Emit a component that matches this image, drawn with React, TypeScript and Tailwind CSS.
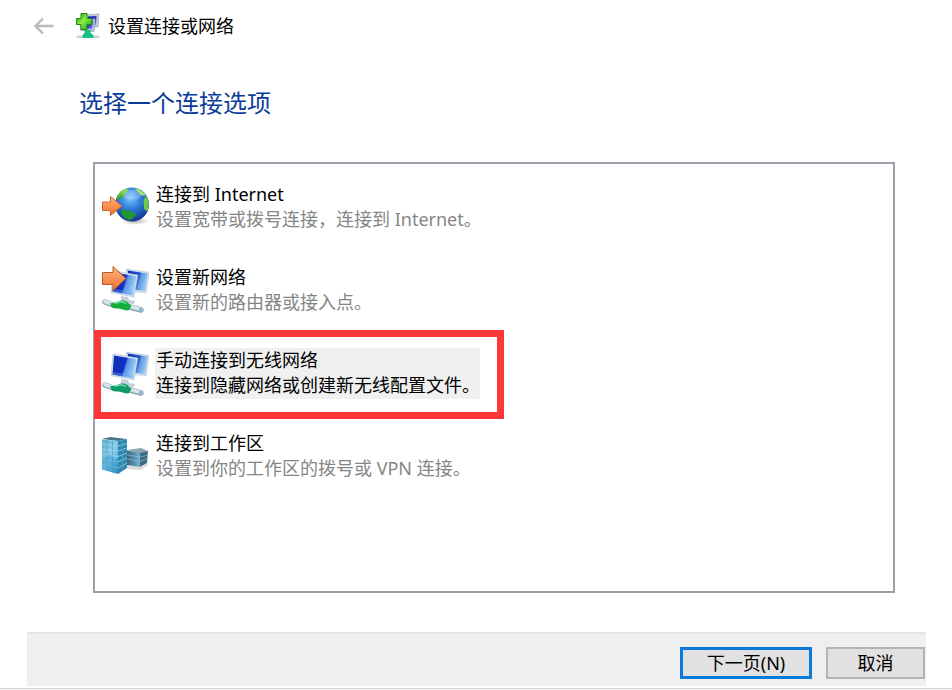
import clsx from 'clsx'
import type { ReactNode } from 'react'

function BackIcon() {
  return (
    <svg className="h-5 w-5" viewBox="0 0 20 20" fill="none" stroke="#bbb" strokeWidth="2.4">
      <path d="M19.5 10H2M9 2.5L1.5 10L9 17.5" />
    </svg>
  )
}

function WizardIcon() {
  return (
    <svg className="h-[26px] w-6" viewBox="0 0 24 26">
      <defs>
        <linearGradient id="wizard-screen" x1="0" y1="0" x2="1" y2="1">
          <stop offset="0" stopColor="#1414a0" />
          <stop offset="0.6" stopColor="#3238d0" />
          <stop offset="1" stopColor="#8f9cf8" />
        </linearGradient>
        <linearGradient id="wizard-plus" x1="0" y1="0" x2="1" y2="1">
          <stop offset="0.1" stopColor="#2fae1f" />
          <stop offset="0.45" stopColor="#8fee45" />
          <stop offset="0.9" stopColor="#22a81c" />
        </linearGradient>
      </defs>
      <path d="M9 1.5L23 1L22 14L12 14Z" fill="#c3c9d8" stroke="#a7b0c6" strokeWidth="0.7" />
      <path d="M12 3.5L20.5 3L20 12L12 12Z" fill="url(#wizard-screen)" />
      <path d="M4 7L19 6L18 18.500L4.500 17.500Z" fill="#bcc4d6" stroke="#98a3bd" strokeWidth="0.7" />
      <path d="M6 8L17 7.800L16 16L6 15.500Z" fill="url(#wizard-screen)" />
      <path d="M0.500 22.500H23.500V25H0.500Z" fill="#c9d0d6" />
      <path d="M8.500 17H14.500V20L17.500 22V25H6.500V22L8.500 20Z" fill="#16c283" />
      <path
        d="M5 0.500H11V5.500H16V11.500H11V16.500H5V11.500H0.500V5.500H5Z"
        fill="url(#wizard-plus)"
        stroke="#1b8a16"
        strokeLinejoin="round"
      />
    </svg>
  )
}

function GlobeIcon() {
  return (
    <svg className="h-12 w-12" viewBox="0 0 48 48">
      <defs>
        <radialGradient id="globe-sea" cx="0.45" cy="0.3" r="0.7">
          <stop offset="0" stopColor="#7fc8fa" />
          <stop offset="0.45" stopColor="#2f80dc" />
          <stop offset="1" stopColor="#123590" />
        </radialGradient>
        <linearGradient id="globe-land" x1="0" y1="0" x2="0" y2="1">
          <stop offset="0" stopColor="#a8e45c" />
          <stop offset="1" stopColor="#219632" />
        </linearGradient>
        <radialGradient id="globe-shadow">
          <stop offset="0" stopColor="#777" stopOpacity="0.6" />
          <stop offset="1" stopColor="#777" stopOpacity="0" />
        </radialGradient>
        <linearGradient id="globe-arrow" x1="0" y1="0" x2="0" y2="1">
          <stop offset="0" stopColor="#ffb377" />
          <stop offset="1" stopColor="#f36f2b" />
        </linearGradient>
      </defs>
      <ellipse cx="34" cy="39" rx="14" ry="4" fill="url(#globe-shadow)" />
      <circle cx="31" cy="22.500" r="17" fill="url(#globe-sea)" />
      <path
        d="M15.500 17C17 11 21 7 26 6.300C28 9 25 10.500 24 13C22 14 21 17 18 17C18 18 16.500 19 15.500 17Z"
        fill="url(#globe-land)"
      />
      <path
        d="M34 6C39 7 42 9.500 44.500 13C44 14.500 42.500 13 41 13.500C39 13 39 11 37 10C36 8.500 34.500 8 34 6Z"
        fill="#9fe06a"
      />
      <path
        d="M45 14C48 18 48.500 24 46.500 28.500C44.500 29.500 42.500 27 43 24C42 20 43 16 45 14Z"
        fill="#6fca4a"
      />
      <path
        d="M20 29C23 26 26 28 29 29.500C33 29.500 36 32 34.500 34C31 36 31 38 27.500 38C23 36.500 20.500 33 20 29Z"
        fill="#23962f"
      />
      <ellipse cx="31" cy="13" rx="9" ry="5" fill="#fff" opacity="0.2" />
      <path
        d="M1.500 20H9.500V14.500L21 24L9.500 33.500V28.500H1.500Z"
        fill="url(#globe-arrow)"
        stroke="#c8642f"
        strokeLinejoin="round"
      />
    </svg>
  )
}

type ComputersIconProps = {
  id: string
  cableColor: string
  children?: ReactNode
}

function ComputersIcon({ id, cableColor, children }: ComputersIconProps) {
  return (
    <svg className="h-12 w-12" viewBox="0 0 48 48">
      <defs>
        <linearGradient id={`${id}-front`} x1="0" y1="0.1" x2="1" y2="0.4">
          <stop offset="0" stopColor="#1230b0" />
          <stop offset="0.55" stopColor="#1030c8" />
          <stop offset="0.62" stopColor="#5a92e4" />
          <stop offset="1" stopColor="#a4d4f8" />
        </linearGradient>
        <linearGradient id={`${id}-back`} x1="0" y1="0" x2="1" y2="0.3">
          <stop offset="0" stopColor="#0f2cb0" />
          <stop offset="0.6" stopColor="#2450cc" />
          <stop offset="0.7" stopColor="#5f98e0" />
          <stop offset="1" stopColor="#93c4f0" />
        </linearGradient>
      </defs>
      <path d="M25 4L48 7.500L45 27.500L32 26.500Z" fill="#d3e2f2" stroke="#a9bcd4" strokeWidth="0.6" />
      <path d="M26.500 5.500L46.500 8.500L44 26L31 24.500Z" fill={`url(#${id}-back)`} />
      <path d="M20 31L27 32L28 35L34 36L33 39L20 38Z" fill="#c3ced8" />
      <path d="M12 6L37 10L33 32L10 27.500Z" fill="#d9e6f3" stroke="#a9bcd4" strokeWidth="0.6" />
      <path d="M13 7.500L35.500 11.200L32 30.500L11.500 26.500Z" fill={`url(#${id}-front)`} />
      <path d="M12 24L32.500 27L32 30.500L11.500 26.500Z" fill="#6fa8ec" opacity="0.4" />
      <path d="M4 37L12 40M29 42L40 45" stroke="#8ba3b2" strokeWidth="5.500" strokeLinecap="round" />
      <path d="M4 36.500L12 39.500M29 41.500L40 44.500" stroke="#d6e5ec" strokeWidth="3.800" strokeLinecap="round" />
      <path d="M38.500 42.500L41.500 43.500L40.500 47L37.500 46Z" fill="#86b4cd" />
      <path
        d="M9 38C12 39 15 37 20 35.500C24 35 27 36.500 28 39C30 39.500 30.500 40.500 30 42L27.500 45.500C23 45.500 20 43.500 16 43.500C12 43.500 10 42.500 9 38Z"
        fill={cableColor}
      />
      <path d="M14 38.500C18 36.500 22 36.500 25 38.500" fill="none" stroke="#8cecba" strokeWidth="1.200" />
      {children}
    </svg>
  )
}

function NewNetworkIcon() {
  return (
    <ComputersIcon id="new-network" cableColor="#16ad3c">
      <defs>
        <linearGradient id="new-network-arrow" x1="0" y1="0" x2="0" y2="1">
          <stop offset="0" stopColor="#ffb67c" />
          <stop offset="1" stopColor="#f0702c" />
        </linearGradient>
      </defs>
      <path
        d="M1.500 7.500H12V1.500L25 13.500L12 25.500V19.500H1.500Z"
        fill="url(#new-network-arrow)"
        stroke="#b9582a"
        strokeLinejoin="round"
      />
    </ComputersIcon>
  )
}

function WirelessIcon() {
  return <ComputersIcon id="wireless" cableColor="#129a68" />
}

function WorkplaceIcon() {
  return (
    <svg className="h-12 w-12" viewBox="0 0 48 48">
      <defs>
        <linearGradient id="tower-front" x1="0" y1="0" x2="1" y2="1">
          <stop offset="0" stopColor="#5ea9cf" />
          <stop offset="0.5" stopColor="#86cdec" />
          <stop offset="1" stopColor="#3c9bc9" />
        </linearGradient>
        <linearGradient id="annex-front" x1="0" y1="0" x2="1" y2="0">
          <stop offset="0" stopColor="#3a647c" />
          <stop offset="1" stopColor="#6fb3d3" />
        </linearGradient>
      </defs>
      <path d="M26 34L40 36L47 32V34L40 39L26 38Z" fill="#999" opacity="0.35" />
      <path d="M26 19L40 17L47 20L39 23Z" fill="#8fa5b2" />
      <path d="M26 19.500L39 22V36L26 34Z" fill="url(#annex-front)" />
      <path d="M39 22L47 20L46 32L39 36Z" fill="#3f6b82" />
      <path
        d="M26 24L39 26L47 24M26 28L39 30.500L46.500 27.500"
        stroke="#a4d4e8"
        strokeWidth="0.5"
        fill="none"
      />
      <path d="M1 8L9 6L26 8L17 10Z" fill="#4a7488" />
      <path d="M1 8.500L17 10V43L1 38.500Z" fill="url(#tower-front)" />
      <path d="M17 10L26 8V37L17 43Z" fill="#2f88b2" />
      <path
        d="M1 13L17 15L26 12.500M1 18L17 20L26 17M1 23L17 25.500L26 22M1 28L17 31L26 27M1 33L17 37L26 32"
        fill="none"
        stroke="#a6dcf0"
        strokeWidth="0.7"
      />
      <path d="M6 9V40M11.500 9.500V41.500M21.500 9V40" stroke="#4f9fc4" strokeWidth="0.6" />
      <path d="M1 28L9 23L14 29L17 27V43L1 38.500Z" fill="#1886bc" opacity="0.35" />
    </svg>
  )
}

const options = [
  { title: '连接到 Internet', description: '设置宽带或拨号连接，连接到 Internet。', Icon: GlobeIcon },
  { title: '设置新网络', description: '设置新的路由器或接入点。', Icon: NewNetworkIcon },
  {
    title: '手动连接到无线网络',
    description: '连接到隐藏网络或创建新无线配置文件。',
    Icon: WirelessIcon,
    selected: true,
  },
  { title: '连接到工作区', description: '设置到你的工作区的拨号或 VPN 连接。', Icon: WorkplaceIcon },
]

export default function App() {
  return (
    <div className="flex min-h-screen flex-col bg-white font-['Noto_Sans','Noto_Sans_CJK_SC',sans-serif] text-lg leading-[25px] text-black">
      <header className="flex items-center pt-[13px] pl-[34px]">
        <button type="button" aria-label="返回">
          <BackIcon />
        </button>
        <div className="ml-[22px] flex items-center gap-2">
          <WizardIcon />
          <span>设置连接或网络</span>
        </div>
      </header>

      <main className="flex grow flex-col pr-[57px] pl-[79px]">
        <h1 className="mt-12 text-2xl leading-8 text-[#0a3c9c]">选择一个连接选项</h1>

        <ul className="mt-[43px] ml-3.5 grow border-2 border-[#9a9fa8] pt-[18px] pl-1.5">
          {options.map(({ title, description, Icon, selected }) => (
            <li key={title} className="relative mb-8">
              <button type="button" className="flex gap-1.5 text-left" aria-pressed={!!selected}>
                <Icon />
                <span className={clsx('block pb-px pl-px', selected && 'bg-[#f0f0f0]')}>
                  <span className="block">{title}</span>
                  <span className={clsx('block', !selected && 'text-[#858585]')}>{description}</span>
                </span>
              </button>
              {selected && (
                <div className="pointer-events-none absolute -top-[18px] -left-[7px] h-[89px] w-[410px] border-[7px] border-[#fc3737]" />
              )}
            </li>
          ))}
        </ul>
      </main>

      <footer className="mt-[39px] mr-[26px] mb-0.5 ml-[27px] flex h-[54px] items-center justify-end gap-3.5 border-t-2 border-[#e4e4e4] bg-[#efefef] pt-1.5 pr-px">
        <button type="button" className="h-8 w-[132px] border-[3px] border-[#0b7bdb] bg-[#e1e1e1]">
          下一页(N)
        </button>
        <button type="button" className="h-8 w-[99px] border-2 border-[#b4b4b4] bg-[#e1e1e1]">
          取消
        </button>
      </footer>
      <div className="h-0.5 border-t border-[#d6d6d6] bg-[#f7f7f7]" />
    </div>
  )
}
